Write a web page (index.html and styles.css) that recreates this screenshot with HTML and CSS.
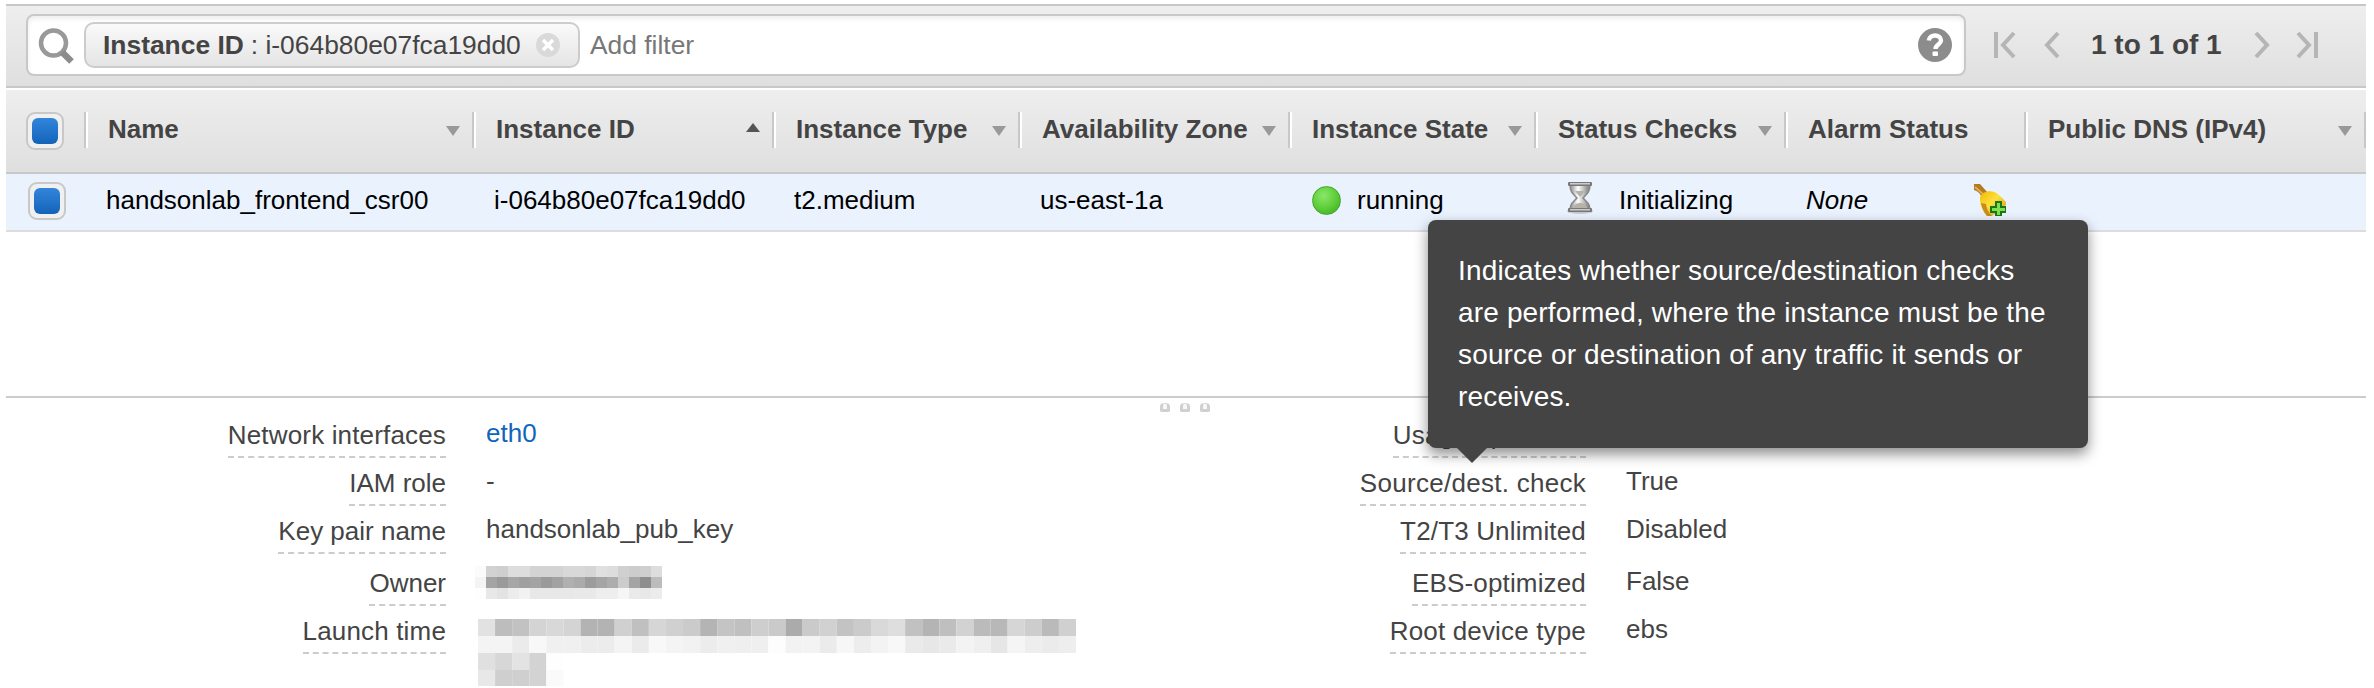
FILE: index.html
```html
<!DOCTYPE html>
<html lang="en">
<head>
<meta charset="utf-8">
<title>Instances</title>
<link rel="stylesheet" href="styles.css">
</head>
<body>
<main class="console">
  <div class="toolbar">
    <div class="search">
      <svg class="search-icon" width="38" height="38" viewBox="0 0 38 38"><ellipse cx="15.500" cy="15" rx="12.500" ry="12.500" fill="none" stroke="#999" stroke-width="4.500"/><path d="M24 24l9.500 9.500" stroke="#8c8c8c" stroke-width="6.500"/></svg>
      <div class="pill"><b>Instance ID</b><span class="pill-value">: i-064b80e07fca19dd0</span>
        <svg class="clear" width="24" height="24" viewBox="0 0 24 24"><circle cx="12" cy="12" r="12" fill="#d9d9d9"/><path d="M7 7l10 10M17 7L7 17" stroke="#fff" stroke-width="3.500"/></svg>
      </div>
      <span class="placeholder">Add filter</span>
      <svg class="help" width="34" height="34" viewBox="0 0 34 34"><circle cx="17" cy="17" r="17" fill="#8c8c8c"/><path d="M10.800 12.500C11.200 5.800 23 5.800 23 12.500c0 4-5.500 4.200-5.500 8.500" fill="none" stroke="#fff" stroke-width="4.400"/><rect x="14.500" y="23.500" width="5.500" height="4.500" rx="1" fill="#fff"/></svg>
    </div>
    <div class="pager">
      <svg width="22" height="28" viewBox="0 0 22 28"><path d="M2 1v26M20 2L9 14l11 12"/></svg>
      <svg class="prev" width="16" height="28" viewBox="0 0 16 28"><path d="M14 2L3 14l11 12"/></svg>
      <b>1 to 1 of 1</b>
      <svg class="next" width="16" height="28" viewBox="0 0 16 28"><path d="M2 2l11 12L2 26"/></svg>
      <svg class="last" width="22" height="28" viewBox="0 0 22 28"><path d="M2 2l11 12L2 26M20 1v26"/></svg>
    </div>
  </div>

  <div class="grid head">
    <div class="pick"><i class="check"></i></div>
    <div class="col">Name<i class="down"></i></div>
    <div class="col">Instance ID<i class="up"></i></div>
    <div class="col">Instance Type<i class="down"></i></div>
    <div class="col">Availability Zone<i class="down"></i></div>
    <div class="col">Instance State<i class="down"></i></div>
    <div class="col">Status Checks<i class="down"></i></div>
    <div class="col">Alarm Status</div>
    <div class="col">Public DNS (IPv4)<i class="down"></i></div>
    <div class="col"></div>
  </div>
  <div class="grid row">
    <div class="pick"><i class="check"></i></div>
    <div class="cell">handsonlab_frontend_csr00</div>
    <div class="cell">i-064b80e07fca19dd0</div>
    <div class="cell">t2.medium</div>
    <div class="cell">us-east-1a</div>
    <div class="cell state"><i class="led"></i>running</div>
    <div class="cell status">
      <svg width="28" height="34" viewBox="0 0 28 34"><defs><linearGradient id="glass"><stop offset="0" stop-color="#888"/><stop offset=".4" stop-color="#fff"/><stop offset="1" stop-color="#777"/></linearGradient></defs><ellipse cx="14" cy="30" rx="13" ry="3" fill="#c5cad3"/><path d="M4 4h20c0 7-3 9-7 13 4 4 7 6 7 12H4c0-6 3-8 7-12C7 13 4 11 4 4z" fill="url(#glass)" stroke="#888" stroke-width="1.500"/><path d="M9 10h10l-5 6zM7 27c1-4 5-5 7-5s6 1 7 5z" fill="#b5b3a8"/><rect x="2" y="1" width="24" height="4" rx="1" fill="#777"/><rect x="4" y="2" width="20" height="1.500" fill="#ccc"/><rect x="2" y="27" width="24" height="4" rx="1" fill="#777"/><rect x="4" y="28" width="20" height="1.500" fill="#ccc"/></svg>Initializing</div>
    <div class="cell alarm"><em>None</em>
      <svg width="32" height="32" viewBox="0 0 32 32"><defs><linearGradient id="bell" x2="1" y2="1"><stop offset="0" stop-color="#f2b705"/><stop offset=".45" stop-color="#ffe03a"/><stop offset="1" stop-color="#d98f1c"/></linearGradient></defs><path d="M0 0h6l8 9-6 6C7 9 3 7 0 6z" fill="#b57a1c"/><path d="M1 3l9 8" stroke="#dcae58" stroke-width="2"/><path d="M6 14c1-5 8-8 14-6 5 2 7 5 12 10v3L18 32h-5C8 26 6 21 6 14z" fill="url(#bell)"/><path d="M7 19c1 6 3 9 6 13h5c-4-4-5-7-6-12z" fill="#c98d1c"/><path d="M22 18h5v5h5v5h-5v4h-5v-4h-5v-5h5z" fill="#7ee04e" stroke="#187818" stroke-width="2"/></svg>
    </div>
  </div>

  <div class="space"></div>
  <div class="splitter"><i></i><i></i><i></i></div>

  <div class="details">
    <dl>
      <dt><span>Network interfaces</span></dt><dd class="link">eth0</dd>
      <dt class="tight"><span>IAM role</span></dt><dd>-</dd>
      <dt class="tight"><span>Key pair name</span></dt><dd>handsonlab_pub_key</dd>
      <dt class="tight"><span>Owner</span></dt><dd><svg class="mosaic owner" width="187" height="33" data-size="11" data-rows="fbd2cfddddd3d3d3d8d8d5e0ddd0cccfdd/f4a49aa6a0a49aa2b0ab9ca5adcca48ebc/fee8e3ecf2e8e8e8e8e9e9eeeef6eae8ec"></svg></dd>
      <dt><span>Launch time</span></dt><dd><svg class="mosaic launch" width="598" height="67" viewBox="0 0 595 67" preserveAspectRatio="none" data-size="17" data-rows="e2bdc2d4d8d4b3b3d0c0d6d0cbb4c4c0cecaabcad1c3cbd9dec1b4bfd2bbb8d6cdbad0/f4f4ebf8f0f0ececf4ebf8f4f2ecf0efeffdf2f3ebf7edf3f8eae7eaf3efe6f5eeebee/e0d7e3d3fe/e8cfcfd3fa"></svg></dd>
    </dl>
    <dl>
      <dt><span>Usage operation</span></dt><dd></dd>
      <dt class="wide"><span>Source/dest. check</span></dt><dd>True</dd>
      <dt><span>T2/T3 Unlimited</span></dt><dd>Disabled</dd>
      <dt><span>EBS-optimized</span></dt><dd>False</dd>
      <dt><span>Root device type</span></dt><dd>ebs</dd>
    </dl>
  </div>
  <div class="tooltip">Indicates whether source/destination checks<br>are performed, where the instance must be the<br>source or destination of any traffic it sends or<br>receives.</div>
</main>
<script src="mosaic.js"></script>
</body>
</html>
```
FILE: styles.css
```css
* { box-sizing: border-box; }
body { margin: 0; background: #fff; color: #444; font: 26px/30px "Liberation Sans", Arial, sans-serif; }
.console { position: relative; width: 2374px; height: 688px; padding: 4px 8px 0 6px; overflow: hidden; }
svg { display: block; flex: none; }

.toolbar { display: flex; align-items: flex-start; height: 84px; padding: 8px 0 0 20px; border-top: 2px solid #c8c8c8; border-bottom: 2px solid #c8c8c8; background: linear-gradient(#eee, #dfdfdf); }
.search { display: flex; align-items: center; width: 1940px; height: 62px; padding: 0 12px 0 10px; border: 2px solid #c8c8c8; border-radius: 8px; background: #fff; box-shadow: inset 0 3px 5px #eee; }
.search-icon { margin-top: 3px; }
.pill { display: flex; align-items: center; width: 496px; height: 46px; margin-left: 8px; padding-left: 17px; border: 2px solid #ccc; border-radius: 10px; background: linear-gradient(#fafafa, #e5e5e5); font-size: 26.4px; white-space: nowrap; }
.pill-value { margin-left: 7px; }
.clear { margin-left: 15px; }
.placeholder { margin-left: 10px; color: #777; font-size: 26.4px; }
.help { margin-left: auto; }
.pager { display: flex; align-items: center; height: 62px; margin-left: 28px; }
.pager path { fill: none; stroke: #b5b5b5; stroke-width: 4; }
.pager b { width: 130px; margin-left: 31px; font-size: 28px; white-space: nowrap; }
.prev { margin-left: 28px; }
.next { margin-left: 33px; }
.last { margin-left: 26px; }

.grid { display: grid; grid-template-columns: 78px 388px 300px 246px 270px 246px 250px 240px 340px 2px; }
.head { height: 86px; padding-top: 22px; border-top: 2px solid #fff; border-bottom: 2px solid #c8c8c8; background: linear-gradient(#eee, #dfdfdf) padding-box; font-weight: bold; }
.col { display: flex; height: 36px; padding: 2px 12px 0 22px; border-left: 2px solid #c8c8c8; box-shadow: inset 2px 0 #fff; white-space: nowrap; overflow: hidden; }
.col:last-child { padding: 0; }
.pick { padding-left: 20px; }
.check { display: block; width: 38px; height: 38px; padding: 4px; border: 2px solid #c8c8c8; border-radius: 9px; background: #f0f0f0; }
.check::before { content: ""; display: block; width: 26px; height: 26px; border-radius: 6px; background: linear-gradient(#3285dc, #1463b9); }
.down, .up { width: 14px; height: 10px; margin: 12px 0 0 auto; background: #999; clip-path: polygon(0 0, 100% 0, 50% 100%); }
.up { height: 9px; margin-top: 9px; background: #555; clip-path: polygon(50% 0, 100% 100%, 0 100%); }
.row { height: 58px; border-bottom: 2px solid #ddd; background: #eaf2fe; color: #000; }
.row .pick { padding: 8px 0 0 22px; }
.cell { display: flex; align-items: flex-start; padding: 11px 0 0 22px; white-space: nowrap; }
.led { flex: none; width: 29px; height: 29px; margin: 1px 16px 0 2px; border: 1px solid #45a52c; border-radius: 50%; background: radial-gradient(circle at 40% 32%, #8be66b, #5fce39 50%, #34a81c); }
.status svg { margin: -4px 25px 0 10px; }
.alarm svg { margin: -1px 0 0 106px; }

.space { height: 164px; }
.splitter { display: flex; justify-content: center; gap: 10px; height: 20px; padding: 5px 2px 0 0; border-top: 2px solid #ccc; }
.splitter i { width: 10px; height: 9px; border: 3px solid #d0d0d0; border-top: 1px solid #ddd; border-radius: 4px 4px 2px 2px; background: #f8f8f8; }
.details { display: grid; grid-template-columns: 1140px 1220px; }
dl { display: grid; grid-template-columns: 440px 1fr; grid-template-rows: 48px 48px 52px 48px 72px; column-gap: 40px; margin: 2px 0 0; }
dt { padding-top: 2px; text-align: right; letter-spacing: .16px; white-space: nowrap; }
dt span { display: inline-block; height: 38px; border-bottom: 2px dashed #ccc; }
.tight { letter-spacing: 0; }
.wide { letter-spacing: .28px; }
dd { margin: 0; white-space: nowrap; }
.link { color: #1166bb; }
.owner { margin-left: -11px; }
.launch { margin: 5px 0 0 -8px; }

.tooltip { position: absolute; left: 1428px; top: 220px; width: 660px; height: 228px; padding: 30px; border-radius: 8px; background: #444; color: #fff; font-size: 28px; line-height: 42px; letter-spacing: .16px; white-space: nowrap; box-shadow: 0 6px 14px rgba(0,0,0,.45); }
.tooltip::after { content: ""; position: absolute; left: 28px; top: 227px; width: 32px; height: 16px; background: #444; clip-path: polygon(0 0, 100% 0, 50% 100%); }
```
FILE: mosaic.js
```js
// Fills each redacted value with grey squares; two hex digits give one square's shade.
for (const svg of document.querySelectorAll(".mosaic")) {
  const size = Number(svg.dataset.size);
  svg.dataset.rows.split("/").forEach((row, y) => {
    row.match(/../g).forEach((shade, x) => {
      const rect = document.createElementNS("http://www.w3.org/2000/svg", "rect");
      rect.setAttribute("x", x * size);
      rect.setAttribute("y", y * size);
      rect.setAttribute("width", size);
      rect.setAttribute("height", size);
      rect.setAttribute("fill", "#" + shade.repeat(3));
      svg.append(rect);
    });
  });
}
```
